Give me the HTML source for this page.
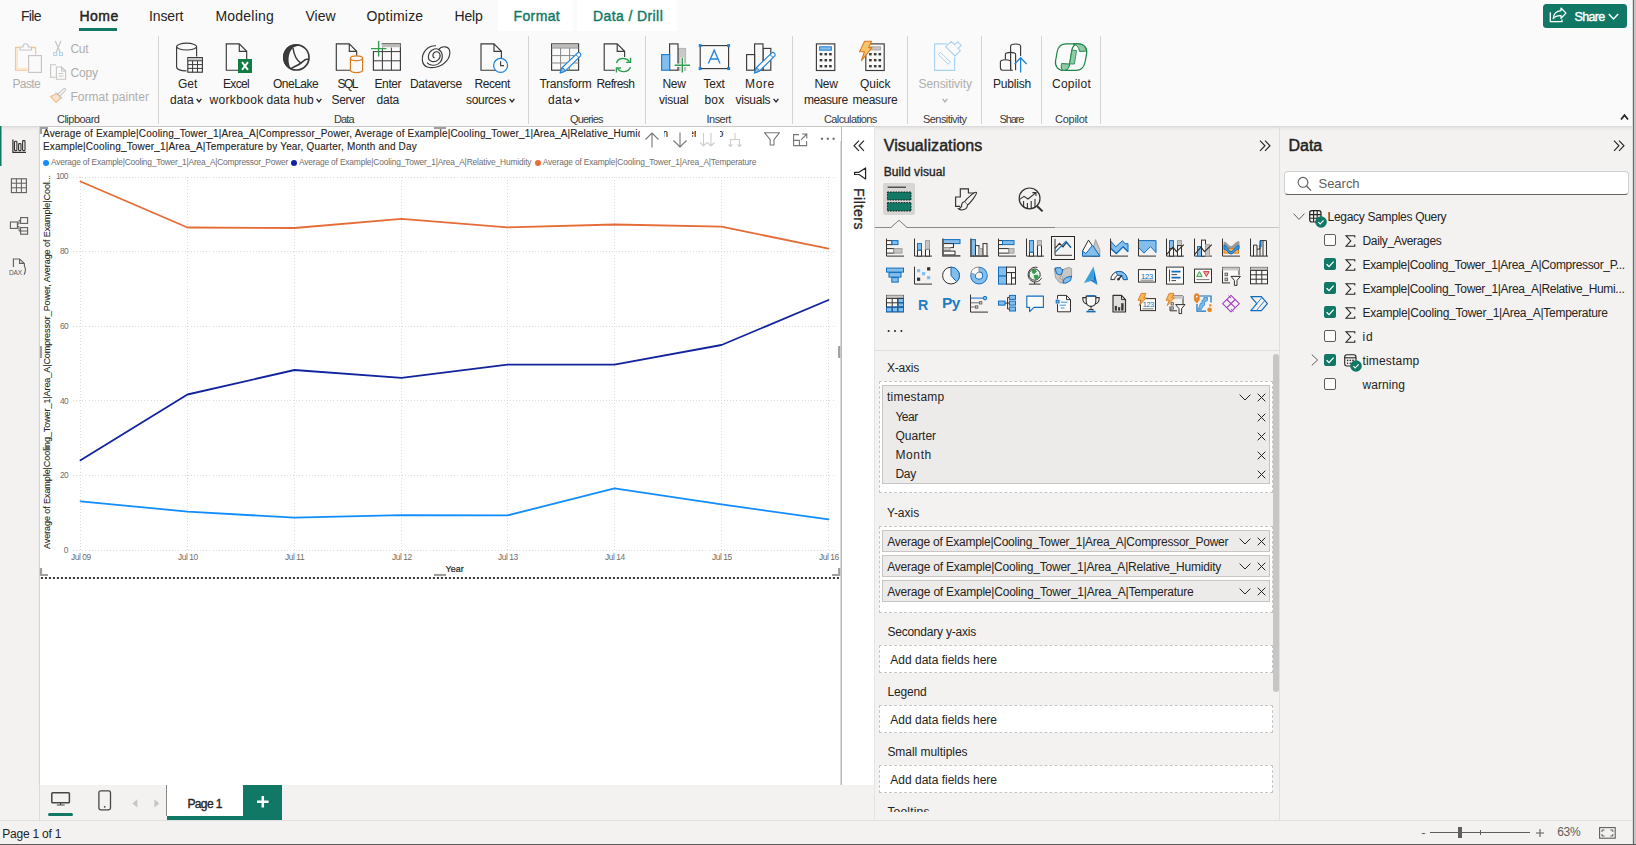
<!DOCTYPE html>
<html lang="en"><head><meta charset="utf-8"><title>Power BI Desktop</title><style>
html,body{margin:0;padding:0;}
body{width:1636px;height:845px;overflow:hidden;position:relative;background:#f3f2f1;font-family:"Liberation Sans",sans-serif;}
.a{position:absolute;display:block;}
.t{position:absolute;display:block;white-space:nowrap;line-height:1;font-family:"Liberation Sans",sans-serif;}
svg{overflow:visible;}
</style></head>
<body>
<div class="a" style="left:0px;top:0px;width:1636px;height:126px;background:#fafafa;"></div>
<div class="a" style="left:498px;top:0px;width:75px;height:30.5px;background:#ffffff;"></div>
<div class="a" style="left:577px;top:0px;width:100px;height:30.5px;background:#ffffff;"></div>
<div class="a" style="left:0px;top:126px;width:1636px;height:719px;background:#f3f2f1;"></div>
<div class="a" style="left:0px;top:126px;width:1636px;height:5px;background:linear-gradient(#d7d6d4,#e3e2e0 25%,#ebeae8 50%,#f0efed 75%,#f3f2f1);"></div>
<div class="a" style="left:40px;top:127px;width:834px;height:657.5px;background:#ffffff;"></div>
<div class="a" style="left:39px;top:127px;width:1px;height:657.5px;background:#d6d5d3;"></div>
<div class="a" style="left:38px;top:127px;width:1px;height:657.5px;background:#eeedeb;"></div>
<div class="a" style="left:840px;top:127px;width:1px;height:657.5px;background:#dcdad8;"></div>
<div class="a" style="left:841px;top:127px;width:1px;height:657.5px;background:#bdbbb8;"></div>
<div class="a" style="left:0px;top:126px;width:1px;height:40px;background:#117865;"></div>
<div class="a" style="left:1px;top:126px;width:1px;height:40px;background:#7db5aa;"></div>
<div class="a" style="left:874px;top:127px;width:1px;height:693px;background:#e5e4e2;"></div>
<div class="a" style="left:1279px;top:127px;width:1px;height:693px;background:#e1dfdd;"></div>
<div class="a" style="left:0px;top:819.5px;width:1636px;height:1.0px;background:#e1dfdd;"></div>
<div class="a" style="left:39px;top:126px;width:836px;height:1px;background:#c9c8c6;"></div>
<span class="t" id="t1" style="left:21px;top:9.40px;font-size:14px;color:#252423;letter-spacing:-0.700px;">File</span>
<span class="t" id="t2" style="left:79.5px;top:9.40px;font-size:14px;color:#252423;-webkit-text-stroke:0.45px #252423;letter-spacing:0.467px;">Home</span>
<div class="a" style="left:79px;top:28px;width:38px;height:3px;background:#117865;"></div>
<span class="t" id="t3" style="left:149px;top:9.40px;font-size:14px;color:#252423;letter-spacing:-0.120px;">Insert</span>
<span class="t" id="t4" style="left:215.5px;top:9.40px;font-size:14px;color:#252423;letter-spacing:0.200px;">Modeling</span>
<span class="t" id="t5" style="left:305.5px;top:9.40px;font-size:14px;color:#252423;letter-spacing:-0.033px;">View</span>
<span class="t" id="t6" style="left:366.5px;top:9.40px;font-size:14px;color:#252423;letter-spacing:0.200px;">Optimize</span>
<span class="t" id="t7" style="left:454.5px;top:9.40px;font-size:14px;color:#252423;letter-spacing:-0.200px;">Help</span>
<span class="t" id="t8" style="left:513.5px;top:9.40px;font-size:14px;color:#117865;-webkit-text-stroke:0.4px #117865;letter-spacing:0.380px;">Format</span>
<span class="t" id="t9" style="left:593px;top:9.40px;font-size:14px;color:#117865;-webkit-text-stroke:0.4px #117865;letter-spacing:0.400px;">Data / Drill</span>
<span class="t" id="t10" style="left:12.5px;top:77.84px;font-size:12px;color:#b0aeac;letter-spacing:-0.650px;">Paste</span>
<span class="t" id="t11" style="left:70.5px;top:42.84px;font-size:12px;color:#b0aeac;letter-spacing:-0.300px;">Cut</span>
<span class="t" id="t12" style="left:70.5px;top:66.84px;font-size:12px;color:#b0aeac;letter-spacing:-0.200px;">Copy</span>
<span class="t" id="t13" style="left:70.5px;top:90.84px;font-size:12px;color:#b0aeac;letter-spacing:0.031px;">Format painter</span>
<span class="t" id="t14" style="left:178px;top:77.84px;font-size:12px;color:#252423;letter-spacing:-0.050px;">Get</span>
<span class="t" id="t15" style="left:170px;top:93.59px;font-size:12px;color:#252423;letter-spacing:0.133px;">data</span>
<svg class="a" style="left:195.5px;top:98.0px;" width="6.0" height="5" viewBox="0 0 6.0 5"><path d="M0.6 0.8 L3.0 4 L5.4 0.8" fill="none" stroke="#252423" stroke-width="1.3"/></svg>
<span class="t" id="t16" style="left:223px;top:77.84px;font-size:12px;color:#252423;letter-spacing:-0.650px;">Excel</span>
<span class="t" id="t17" style="left:209.5px;top:93.59px;font-size:12px;color:#252423;letter-spacing:0.343px;">workbook</span>
<span class="t" id="t18" style="left:273px;top:77.84px;font-size:12px;color:#252423;letter-spacing:-0.517px;">OneLake</span>
<span class="t" id="t19" style="left:266.5px;top:93.59px;font-size:12px;color:#252423;letter-spacing:0.057px;">data hub</span>
<svg class="a" style="left:315.5px;top:98.0px;" width="6.0" height="5" viewBox="0 0 6.0 5"><path d="M0.6 0.8 L3.0 4 L5.4 0.8" fill="none" stroke="#252423" stroke-width="1.3"/></svg>
<span class="t" id="t20" style="left:337.5px;top:77.84px;font-size:12px;color:#252423;letter-spacing:-1.550px;">SQL</span>
<span class="t" id="t21" style="left:331.5px;top:93.59px;font-size:12px;color:#252423;letter-spacing:-0.320px;">Server</span>
<span class="t" id="t22" style="left:374.5px;top:77.84px;font-size:12px;color:#252423;letter-spacing:-0.400px;">Enter</span>
<span class="t" id="t23" style="left:376.5px;top:93.59px;font-size:12px;color:#252423;letter-spacing:-0.200px;">data</span>
<span class="t" id="t24" style="left:410px;top:77.84px;font-size:12px;color:#252423;letter-spacing:-0.325px;">Dataverse</span>
<span class="t" id="t25" style="left:474.5px;top:77.84px;font-size:12px;color:#252423;letter-spacing:-0.420px;">Recent</span>
<span class="t" id="t26" style="left:466px;top:93.59px;font-size:12px;color:#252423;letter-spacing:-0.308px;">sources</span>
<svg class="a" style="left:508.5px;top:98.0px;" width="6.0" height="5" viewBox="0 0 6.0 5"><path d="M0.6 0.8 L3.0 4 L5.4 0.8" fill="none" stroke="#252423" stroke-width="1.3"/></svg>
<span class="t" id="t27" style="left:539.5px;top:77.84px;font-size:12px;color:#252423;letter-spacing:-0.263px;">Transform</span>
<span class="t" id="t28" style="left:548px;top:93.59px;font-size:12px;color:#252423;letter-spacing:0.300px;">data</span>
<svg class="a" style="left:573.5px;top:98.0px;" width="6.0" height="5" viewBox="0 0 6.0 5"><path d="M0.6 0.8 L3.0 4 L5.4 0.8" fill="none" stroke="#252423" stroke-width="1.3"/></svg>
<span class="t" id="t29" style="left:596.5px;top:77.84px;font-size:12px;color:#252423;letter-spacing:-0.600px;">Refresh</span>
<span class="t" id="t30" style="left:662.5px;top:77.84px;font-size:12px;color:#252423;letter-spacing:-0.300px;">New</span>
<span class="t" id="t31" style="left:659px;top:93.59px;font-size:12px;color:#252423;letter-spacing:-0.220px;">visual</span>
<span class="t" id="t32" style="left:703.5px;top:77.84px;font-size:12px;color:#252423;letter-spacing:-0.200px;">Text</span>
<span class="t" id="t33" style="left:704.5px;top:93.59px;font-size:12px;color:#252423;letter-spacing:0.200px;">box</span>
<span class="t" id="t34" style="left:745px;top:77.84px;font-size:12px;color:#252423;letter-spacing:0.633px;">More</span>
<span class="t" id="t35" style="left:735.5px;top:93.59px;font-size:12px;color:#252423;letter-spacing:-0.267px;">visuals</span>
<svg class="a" style="left:772.5px;top:98.0px;" width="6.0" height="5" viewBox="0 0 6.0 5"><path d="M0.6 0.8 L3.0 4 L5.4 0.8" fill="none" stroke="#252423" stroke-width="1.3"/></svg>
<span class="t" id="t36" style="left:814.5px;top:77.84px;font-size:12px;color:#252423;letter-spacing:-0.300px;">New</span>
<span class="t" id="t37" style="left:804px;top:93.59px;font-size:12px;color:#252423;letter-spacing:-0.433px;">measure</span>
<span class="t" id="t38" style="left:860px;top:77.84px;font-size:12px;color:#252423;letter-spacing:-0.025px;">Quick</span>
<span class="t" id="t39" style="left:852.5px;top:93.59px;font-size:12px;color:#252423;letter-spacing:-0.267px;">measure</span>
<span class="t" id="t40" style="left:918.5px;top:77.84px;font-size:12px;color:#b0aeac;letter-spacing:-0.060px;">Sensitivity</span>
<svg class="a" style="left:941.5px;top:98.0px;" width="6.0" height="5" viewBox="0 0 6.0 5"><path d="M0.6 0.8 L3.0 4 L5.4 0.8" fill="none" stroke="#b0aeac" stroke-width="1.3"/></svg>
<span class="t" id="t41" style="left:993px;top:77.84px;font-size:12px;color:#252423;letter-spacing:-0.183px;">Publish</span>
<span class="t" id="t42" style="left:1052px;top:77.84px;font-size:12px;color:#252423;letter-spacing:0.233px;">Copilot</span>
<span class="t" id="t43" style="left:57px;top:113.69px;font-size:11px;color:#3b3a39;letter-spacing:-0.513px;">Clipboard</span>
<span class="t" id="t44" style="left:334px;top:113.69px;font-size:11px;color:#3b3a39;letter-spacing:-0.867px;">Data</span>
<span class="t" id="t45" style="left:570px;top:113.69px;font-size:11px;color:#3b3a39;letter-spacing:-0.850px;">Queries</span>
<span class="t" id="t46" style="left:706.5px;top:113.69px;font-size:11px;color:#3b3a39;letter-spacing:-0.520px;">Insert</span>
<span class="t" id="t47" style="left:824px;top:113.69px;font-size:11px;color:#3b3a39;letter-spacing:-0.600px;">Calculations</span>
<span class="t" id="t48" style="left:923px;top:113.69px;font-size:11px;color:#3b3a39;letter-spacing:-0.560px;">Sensitivity</span>
<span class="t" id="t49" style="left:999.5px;top:113.69px;font-size:11px;color:#3b3a39;letter-spacing:-1.150px;">Share</span>
<span class="t" id="t50" style="left:1055px;top:113.69px;font-size:11px;color:#3b3a39;letter-spacing:-0.267px;">Copilot</span>
<div class="a" style="left:158.0px;top:36px;width:1.0px;height:88px;background:#d6d4d2;"></div>
<div class="a" style="left:528.0px;top:36px;width:1.0px;height:88px;background:#d6d4d2;"></div>
<div class="a" style="left:645.0px;top:36px;width:1.0px;height:88px;background:#d6d4d2;"></div>
<div class="a" style="left:792.0px;top:36px;width:1.0px;height:88px;background:#d6d4d2;"></div>
<div class="a" style="left:907.0px;top:36px;width:1.0px;height:88px;background:#d6d4d2;"></div>
<div class="a" style="left:981.0px;top:36px;width:1.0px;height:88px;background:#d6d4d2;"></div>
<div class="a" style="left:1041.0px;top:36px;width:1.0px;height:88px;background:#d6d4d2;"></div>
<div class="a" style="left:1100.0px;top:36px;width:1.0px;height:88px;background:#d6d4d2;"></div>
<div class="a" style="left:1543px;top:4px;width:84px;height:24px;background:#117865;border-radius:3.5px;"></div>
<span class="t" id="t51" style="left:1574.6px;top:10.62px;font-size:12.5px;color:#ffffff;-webkit-text-stroke:0.4px #ffffff;letter-spacing:-0.675px;">Share</span>
<svg class="a" style="left:1608.2px;top:13px;" width="11" height="8" viewBox="0 0 11 8"><path d="M0.8 1 L5.5 6 L10.2 1" fill="none" stroke="#fff" stroke-width="1.4"/></svg>
<svg class="a" style="left:1549px;top:7px;" width="18" height="16" viewBox="0 0 18 16"><path d="M1.3 5.2 V14.6 H13 V12.4" fill="none" stroke="#fff" stroke-width="1.3"/><path d="M12 1 L17 6.1 L12 11.3 V8.6 C8.4 8.4 6 9.4 4.2 11.6 C4.6 7 7.4 3.9 12 3.6 Z" fill="none" stroke="#fff" stroke-width="1.25" stroke-linejoin="round"/></svg>
<svg class="a" style="left:1619.5px;top:112.5px;" width="9" height="8" viewBox="0 0 9 8"><path d="M1 6.5 L4.5 2.2 L8 6.5" fill="none" stroke="#252423" stroke-width="1.8"/></svg>
<svg class="a" style="left:0;top:0" width="1110" height="126" viewBox="0 0 1110 126" fill="none"><path d="M19.5 47.5 H15.6 V70.2 H27.6 M32 47.5 H35.6 V54.6" stroke="#f2c796" stroke-width="1.3" fill="none"/><path d="M17.2 49.2 V68.6 H27.6" stroke="#fde6c8" stroke-width="1.6" fill="none"/><path d="M20 50 V47 H23 C23 42.6 28.4 42.6 28.4 47 H31.5 V50 Z" stroke="#c8c6c4" stroke-width="1.1" fill="#fafafa"/><rect x="28.6" y="55.6" width="12.8" height="16.8" stroke="#c8c6c4" stroke-width="1.2" fill="#fafafa"/><path d="M55.3 41 L60.2 52.5 M61 41 L56.1 52.5" stroke="#c8c6c4" stroke-width="1.2" fill="none"/><rect x="53.7" y="52.6" width="3" height="2.8" stroke="#a9d3f2" stroke-width="1" fill="none"/><rect x="59.5" y="52.6" width="3" height="2.8" stroke="#a9d3f2" stroke-width="1" fill="none"/><path d="M56 64.8 H50.6 V77.2 H55.6" stroke="#c8c6c4" stroke-width="1.1" fill="none"/><path d="M61.6 67 H56.4 V79.2 H65.6 V71 L61.6 67 V71 H65.6 M58.6 73.5 H63.4 M58.6 76 H63.4" stroke="#c8c6c4" stroke-width="1.1" fill="none"/><path d="M57.5 94.5 L63.6 88.8 C65.2 87.6 66.4 89.6 65 90.8 L60 95.8" stroke="#c8c6c4" stroke-width="1.1" fill="none"/><path d="M50.6 96.6 L57.2 93.4 L61.2 97.6 L56 102.4 Z" stroke="#f0b98a" stroke-width="1.1" fill="#fbe3cf" stroke-linejoin="round"/><path d="M55.4 92.6 L61.8 98.6" stroke="#c8c6c4" stroke-width="1.3"/><path d="M176.6 46.6 V67 C176.6 69.4 181 71 186.6 70.8 M196.6 46.6 V56.6" stroke="#3b3a39" stroke-width="1.15" fill="none"/><ellipse cx="186.6" cy="46.6" rx="10" ry="3.4" stroke="#3b3a39" stroke-width="1.15" fill="#fafafa"/><rect x="187.8" y="57.6" width="14.6" height="14.6" stroke="#3b3a39" stroke-width="1.15" fill="#fafafa"/><rect x="188.4" y="58.2" width="13.4" height="2.2" fill="#c8c6c4"/><path d="M187.8 60.8 H202.4 M187.8 64.6 H202.4 M187.8 68.4 H202.4 M192.6 60.8 V72.2 M197.5 60.8 V72.2" stroke="#3b3a39" stroke-width="1" fill="none"/><path d="M239.3 43.9 H226.3 V70.2 H246.70000000000002 V51.3 L239.3 43.9 Z" stroke="#3b3a39" stroke-width="1.15" fill="#fafafa" stroke-linejoin="miter"/><path d="M239.3 43.9 V51.3 H246.70000000000002" stroke="#3b3a39" stroke-width="1.15" fill="none"/><rect x="238" y="59" width="14" height="14" fill="#107c41"/><path d="M242 62.2 L248 69.8 M248 62.2 L242 69.8" stroke="#fff" stroke-width="1.9"/><circle cx="296.4" cy="57.4" r="12.6" stroke="#3b3a39" stroke-width="1.7" fill="none"/><path d="M296 44.2 C286 44 281.6 53 283.4 60.6 C284.6 65 287.4 68 291 69.4 C287.6 63.4 287.2 53 293.4 47.6 C296 45.6 301 45.6 303.6 47 C301.4 45 298.6 44.2 296 44.2 Z" fill="#3b3a39"/><path d="M293 48 C294 55 297 60.6 301 63.4 M290.6 68.6 C295.6 66.4 300 64.4 303 61.4 C305.4 59.2 307.6 58.4 309 60" stroke="#3b3a39" stroke-width="1.5" fill="none"/><path d="M349.3 43.9 H336.3 V70.2 H356.7 V51.3 L349.3 43.9 Z" stroke="#3b3a39" stroke-width="1.15" fill="#fafafa" stroke-linejoin="miter"/><path d="M349.3 43.9 V51.3 H356.7" stroke="#3b3a39" stroke-width="1.15" fill="none"/><path d="M350.4 58.2 V70 C350.4 73.4 362.6 73.4 362.6 70 V58.2" stroke="#d97b1e" stroke-width="1.2" fill="#fafafa"/><ellipse cx="356.5" cy="58.2" rx="6.1" ry="2.4" stroke="#d97b1e" stroke-width="1.2" fill="#fafafa"/><rect x="373.4" y="43.9" width="27" height="26.3" stroke="#3b3a39" stroke-width="1.15" fill="#fafafa"/><rect x="382" y="44.2" width="18.4" height="3" fill="#bebcba"/><path d="M373.4 51.6 H400.4 M373.4 60.8 H400.4 M382.4 47.6 V70.2 M391.4 47.6 V70.2" stroke="#3b3a39" stroke-width="1" fill="none"/><rect x="371" y="41" width="10.6" height="10" fill="#fafafa"/><path d="M378.6 41 V56.6 M371 48.6 H386.4" stroke="#2e9e4f" stroke-width="1.4"/><path d="M436 45.8 C428 45.4 421.6 52 422.4 60.4 C423 67.4 430 68.6 436.6 67 C445 65 450.4 58 449.8 51.6 C449.2 45.6 441.6 45.6 438.6 49.6 C435.4 47.4 428.6 50.4 428.4 56.6 C428.2 62.4 435 62.8 438.4 59.6 C441.6 56.6 440 51.4 436.2 51.8 C432.6 52.2 431.8 57 434.6 58" stroke="#3b3a39" stroke-width="1.15" fill="none"/><path d="M438.6 49.6 C443.6 52.6 443.4 60 438.6 63.6 C435 66.2 429.6 65.6 427 62.6" stroke="#3b3a39" stroke-width="1.15" fill="none"/><path d="M494 43.9 H481 V70.2 H501.4 V51.3 L494 43.9 Z" stroke="#3b3a39" stroke-width="1.15" fill="#fafafa" stroke-linejoin="miter"/><path d="M494 43.9 V51.3 H501.4" stroke="#3b3a39" stroke-width="1.15" fill="none"/><circle cx="500.6" cy="65.4" r="7" stroke="#2083d5" stroke-width="1.25" fill="#fafafa"/><path d="M500.6 61.2 V65.6 H504" stroke="#3b3a39" stroke-width="1.1" fill="none"/><rect x="551.6" y="43.9" width="27" height="26.3" stroke="#3b3a39" stroke-width="1.15" fill="#fafafa"/><rect x="552.2" y="44.4" width="25.8" height="3.2" fill="#bebcba"/><path d="M551.6 48 H578.6 M551.6 55.6 H578.6 M551.6 63 H578.6 M560.6 48 V70.2 M569.6 48 V70.2" stroke="#8a8886" stroke-width="1" fill="none"/><path d="M560.2 73 L561.8000000000001 68 L577.6 52.8 C579.2 51.6 581.8000000000001 54 580.6 55.8 L565.2 71.2 Z" stroke="#2083d5" stroke-width="1.15" fill="#fafafa" stroke-linejoin="round"/><path d="M560.2 73 L561.8000000000001 68 C563.6 68 565.2 69.4 565.2 71.2 Z" fill="#83beec" stroke="#2083d5" stroke-width="1"/><path d="M575.8000000000001 54.6 L579.0 57.6" stroke="#2083d5" stroke-width="1"/><path d="M617.2 43.9 H604.2 V70.2 H624.6 V51.3 L617.2 43.9 Z" stroke="#3b3a39" stroke-width="1.15" fill="#fafafa" stroke-linejoin="miter"/><path d="M617.2 43.9 V51.3 H624.6" stroke="#3b3a39" stroke-width="1.15" fill="none"/><rect x="615" y="57" width="12" height="14" fill="#fafafa"/><path d="M616.6 63.2 C617.6 57.4 626.4 57 629.4 61.8 M630.4 67 C629 72.6 620.4 73.2 617.6 68.4" stroke="#2e9e4f" stroke-width="1.35" fill="none"/><path d="M630.6 57.8 V62.4 H626 M616.4 72.6 V68 H621" stroke="#2e9e4f" stroke-width="1.35" fill="none"/><rect x="678" y="48.4" width="7.6" height="21.8" fill="#c8c8c8" stroke="#b5b3b1" stroke-width="1"/><rect x="669.6" y="43.9" width="8.4" height="26.3" fill="#fafafa" stroke="#3b3a39" stroke-width="1.15"/><rect x="661.6" y="54.6" width="8" height="15.6" fill="#83beec" stroke="#2083d5" stroke-width="1.2"/><rect x="680.6" y="57.4" width="3.4" height="15" fill="#fafafa"/><rect x="675" y="63.6" width="15" height="3.4" fill="#fafafa"/><path d="M682.3 57.8 V72.6 M674.6 65.3 H690" stroke="#2e9e4f" stroke-width="1.4"/><rect x="700.2" y="45.6" width="28.4" height="23" fill="#fafafa" stroke="#3b3a39" stroke-width="1.15"/><rect x="698.7" y="44.1" width="3" height="3" fill="#2083d5"/><rect x="727.1" y="44.1" width="3" height="3" fill="#2083d5"/><rect x="698.7" y="67.1" width="3" height="3" fill="#2083d5"/><rect x="727.1" y="67.1" width="3" height="3" fill="#2083d5"/><path d="M708.4 63.4 L714.2 50.2 L720 63.4 M710.4 59 H718" stroke="#2083d5" stroke-width="1.3" fill="none"/><rect x="763" y="48.4" width="7.8" height="21.8" fill="#fafafa" stroke="#3b3a39" stroke-width="1.15"/><rect x="754.6" y="43.9" width="8.4" height="26.3" fill="#fafafa" stroke="#3b3a39" stroke-width="1.15"/><rect x="746.6" y="54.6" width="8" height="15.6" fill="#fafafa" stroke="#3b3a39" stroke-width="1.15"/><path d="M754.4 73 L756.0 68 L771.8 52.8 C773.4 51.6 776.0 54 774.8 55.8 L759.4 71.2 Z" stroke="#2083d5" stroke-width="1.15" fill="#fafafa" stroke-linejoin="round"/><path d="M754.4 73 L756.0 68 C757.8 68 759.4 69.4 759.4 71.2 Z" fill="#83beec" stroke="#2083d5" stroke-width="1"/><path d="M770.0 54.6 L773.1999999999999 57.6" stroke="#2083d5" stroke-width="1"/><rect x="816.4" y="43.9" width="18.4" height="26.6" fill="#fafafa" stroke="#3b3a39" stroke-width="1.15"/><rect x="819.6" y="46.8" width="11.8" height="3.4" fill="#83beec" stroke="#2083d5" stroke-width="1"/><rect x="819.7" y="53.0" width="2.6" height="2.4" fill="#3b3a39"/><rect x="819.7" y="59.0" width="2.6" height="2.4" fill="#3b3a39"/><rect x="819.7" y="65.0" width="2.6" height="2.4" fill="#3b3a39"/><rect x="824.5" y="53.0" width="2.6" height="2.4" fill="#3b3a39"/><rect x="824.5" y="59.0" width="2.6" height="2.4" fill="#3b3a39"/><rect x="824.5" y="65.0" width="2.6" height="2.4" fill="#3b3a39"/><rect x="829.1" y="53.0" width="2.6" height="2.4" fill="#3b3a39"/><rect x="829.1" y="59.0" width="2.6" height="2.4" fill="#3b3a39"/><rect x="829.1" y="65.0" width="2.6" height="2.4" fill="#3b3a39"/><rect x="865.8" y="43.9" width="18.4" height="26.6" fill="#fafafa" stroke="#3b3a39" stroke-width="1.15"/><rect x="870.6" y="46.8" width="10" height="3.2" fill="#c8c6c4" stroke="#a19f9d" stroke-width="0.8"/><rect x="869.1" y="53.0" width="2.6" height="2.4" fill="#3b3a39"/><rect x="869.1" y="59.0" width="2.6" height="2.4" fill="#3b3a39"/><rect x="869.1" y="65.0" width="2.6" height="2.4" fill="#3b3a39"/><rect x="873.9" y="53.0" width="2.6" height="2.4" fill="#3b3a39"/><rect x="873.9" y="59.0" width="2.6" height="2.4" fill="#3b3a39"/><rect x="873.9" y="65.0" width="2.6" height="2.4" fill="#3b3a39"/><rect x="878.5" y="53.0" width="2.6" height="2.4" fill="#3b3a39"/><rect x="878.5" y="59.0" width="2.6" height="2.4" fill="#3b3a39"/><rect x="878.5" y="65.0" width="2.6" height="2.4" fill="#3b3a39"/><path d="M864.6 41.2 H871.6 L868.6 47.6 H872 L861.4 60.6 L864.4 51.8 H859.6 Z" fill="#fbc36a" stroke="#d97b1e" stroke-width="1.1" stroke-linejoin="round"/><path d="M947 43.9 H934.6 V70.4 H954.6 V57" stroke="#a9d3f2" stroke-width="1.1" fill="none"/><path d="M945.6 46.6 L951.2 41.4 L960.4 50.6 L955 56 Z M951.2 41.4 L953.6 43.6" stroke="#a9d3f2" stroke-width="1.1" fill="#fafafa" stroke-linejoin="round"/><path d="M954.4 45.2 L957.8 41.8 L961.2 45.4 L957.6 48.6" stroke="#a9d3f2" stroke-width="1.1" fill="#fafafa"/><path d="M938.4 54.6 L940.6 52.4 L950.4 62 L948.2 64.2 Z" stroke="#a9d3f2" stroke-width="1" fill="none"/><path d="M1010.6 70.2 V46.2 C1010.6 43.2 1020.6 43.2 1020.6 46.2 V56" stroke="#3b3a39" stroke-width="1.15" fill="none"/><path d="M1005.4 59.4 V54.4 C1005.4 51.6 1015.6 51.6 1015.6 54.4 V70.2" stroke="#3b3a39" stroke-width="1.15" fill="none"/><path d="M1013 70.2 H1002.6 C1000.6 70.2 1000.4 69 1000.4 67.6 V62 C1000.4 59 1010.6 59 1010.6 62 V70.2" stroke="#3b3a39" stroke-width="1.15" fill="none"/><path d="M1020.6 72.6 V58 M1014.6 64 L1020.6 57.8 L1026.6 64" stroke="#2083d5" stroke-width="1.3" fill="none"/><path d="M1066 43.9 H1078.4 C1084 43.9 1087.6 48 1086.6 53.6 L1085 62.4 C1084 67 1080.6 70.4 1076 70.4 H1063.6 C1058 70.4 1054.6 66 1055.6 60.6 L1057.2 51.6 C1058.2 47 1061.4 43.9 1066 43.9 Z" stroke="#1e8449" stroke-width="1.2" fill="none"/><path d="M1078.4 43.9 C1074.6 43.9 1072.6 46.6 1071.8 50 L1069.6 64 C1069 67.6 1067.4 70.4 1063.6 70.4" stroke="#1e8449" stroke-width="1.2" fill="none"/><path d="M1073 43.9 C1076 43.9 1079 47.6 1079.6 51.4 L1086.4 51 C1086 47 1083 43.9 1078.4 43.9 Z" fill="#8fcaa6" stroke="#1e8449" stroke-width="1"/><path d="M1061.6 63.6 L1069.6 64 C1069.2 67.6 1067.4 70.4 1063.6 70.4 C1061.4 70.4 1060.8 66.4 1061.6 63.6 Z" fill="#8fcaa6" stroke="#1e8449" stroke-width="1"/><path d="M1072 50 L1076.6 50.6 L1074.4 64 L1069.6 64 Z" fill="#8fcaa6" stroke="#1e8449" stroke-width="0.8"/></svg>
<div class="a" style="left:40px;top:127px;width:708px;height:13.5px;overflow:hidden;"><span class="t" id="t52" style="left:3px;top:2.04px;font-size:10px;color:#252423;-webkit-text-stroke:0.12px #252423;letter-spacing:0.176px;">Average of Example|Cooling_Tower_1|Area_A|Compressor_Power, Average of Example|Cooling_Tower_1|Area_A|Relative_Humidity and Average of</span></div>
<span class="t" id="t53" style="left:43px;top:141.53px;font-size:10px;color:#252423;-webkit-text-stroke:0.12px #252423;letter-spacing:0.170px;">Example|Cooling_Tower_1|Area_A|Temperature by Year, Quarter, Month and Day</span>
<div class="a" style="left:640px;top:127px;width:24px;height:25px;background:#ffffff;"></div>
<div class="a" style="left:668px;top:127px;width:24px;height:25px;background:#ffffff;"></div>
<div class="a" style="left:696px;top:127px;width:24px;height:25px;background:#ffffff;"></div>
<div class="a" style="left:724px;top:127px;width:24px;height:25px;background:#ffffff;"></div>
<div class="a" style="left:748px;top:127px;width:93px;height:14px;background:#ffffff;"></div>
<div class="a" style="left:43px;top:159.5px;width:6px;height:6.0px;background:#118DFF;border-radius:50%;"></div>
<div class="a" style="left:291px;top:159.5px;width:6px;height:6.0px;background:#12239E;border-radius:50%;"></div>
<div class="a" style="left:535px;top:159.5px;width:6px;height:6.0px;background:#E66C37;border-radius:50%;"></div>
<span class="t" id="t54" style="left:51px;top:158.19px;font-size:8.4px;color:#706e6c;letter-spacing:-0.195px;">Average of Example|Cooling_Tower_1|Area_A|Compressor_Power</span>
<span class="t" id="t55" style="left:299px;top:158.19px;font-size:8.4px;color:#706e6c;letter-spacing:-0.162px;">Average of Example|Cooling_Tower_1|Area_A|Relative_Humidity</span>
<span class="t" id="t56" style="left:542.8px;top:158.19px;font-size:8.4px;color:#706e6c;letter-spacing:-0.152px;">Average of Example|Cooling_Tower_1|Area_A|Temperature</span>
<svg class="a" style="left:0;top:0" width="845" height="600" viewBox="0 0 845 600"><g stroke="#dddbd9" stroke-width="1" stroke-dasharray="1 2.1" shape-rendering="crispEdges"><line x1="73" y1="177.5" x2="834" y2="177.5"/><line x1="73" y1="251.5" x2="834" y2="251.5"/><line x1="73" y1="326.5" x2="834" y2="326.5"/><line x1="73" y1="400.5" x2="834" y2="400.5"/><line x1="73" y1="475.5" x2="834" y2="475.5"/><line x1="73" y1="550.5" x2="834" y2="550.5"/><line x1="80.5" y1="177" x2="80.5" y2="550.5"/><line x1="187.5" y1="177" x2="187.5" y2="550.5"/><line x1="294.5" y1="177" x2="294.5" y2="550.5"/><line x1="401.5" y1="177" x2="401.5" y2="550.5"/><line x1="507.5" y1="177" x2="507.5" y2="550.5"/><line x1="614.5" y1="177" x2="614.5" y2="550.5"/><line x1="721.5" y1="177" x2="721.5" y2="550.5"/><line x1="828.5" y1="177" x2="828.5" y2="550.5"/></g><polyline points="80.5,501.3 187.5,511.6 294.5,517.7 401.5,515.2 507.5,515.4 614.5,488.4 721.5,504.4 828.5,519.3" fill="none" stroke="#118DFF" stroke-width="1.8" stroke-linejoin="round" stroke-linecap="round"/><polyline points="80.5,460.2 187.5,394.5 294.5,370.0 401.5,377.8 507.5,364.6 614.5,364.6 721.5,345.0 828.5,300.0" fill="none" stroke="#12239E" stroke-width="1.8" stroke-linejoin="round" stroke-linecap="round"/><polyline points="80.5,181.5 187.5,227.5 294.5,228.0 401.5,218.8 507.5,227.3 614.5,224.5 721.5,226.7 828.5,248.7" fill="none" stroke="#E66C37" stroke-width="1.8" stroke-linejoin="round" stroke-linecap="round"/></svg>
<span class="t" id="t57" style="left:56.0px;top:172.19px;font-size:8.4px;color:#706e6c;letter-spacing:-0.800px;">100</span>
<span class="t" id="t58" style="left:60.0px;top:247.09px;font-size:8.4px;color:#706e6c;letter-spacing:-0.600px;">80</span>
<span class="t" id="t59" style="left:60.0px;top:322.19px;font-size:8.4px;color:#706e6c;letter-spacing:-0.600px;">60</span>
<span class="t" id="t60" style="left:60.0px;top:396.89px;font-size:8.4px;color:#706e6c;letter-spacing:-0.600px;">40</span>
<span class="t" id="t61" style="left:60.0px;top:471.49px;font-size:8.4px;color:#706e6c;letter-spacing:-0.600px;">20</span>
<span class="t" id="t62" style="left:63.7px;top:546.09px;font-size:8.4px;color:#706e6c;">0</span>
<span class="t" id="t63" style="left:70.9px;top:552.89px;font-size:8.4px;color:#706e6c;letter-spacing:-0.400px;">Jul 09</span>
<span class="t" id="t64" style="left:177.9px;top:552.89px;font-size:8.4px;color:#706e6c;letter-spacing:-0.400px;">Jul 10</span>
<span class="t" id="t65" style="left:284.9px;top:552.89px;font-size:8.4px;color:#706e6c;letter-spacing:-0.400px;">Jul 11</span>
<span class="t" id="t66" style="left:391.9px;top:552.89px;font-size:8.4px;color:#706e6c;letter-spacing:-0.400px;">Jul 12</span>
<span class="t" id="t67" style="left:497.9px;top:552.89px;font-size:8.4px;color:#706e6c;letter-spacing:-0.400px;">Jul 13</span>
<span class="t" id="t68" style="left:604.9px;top:552.89px;font-size:8.4px;color:#706e6c;letter-spacing:-0.400px;">Jul 14</span>
<span class="t" id="t69" style="left:711.9px;top:552.89px;font-size:8.4px;color:#706e6c;letter-spacing:-0.400px;">Jul 15</span>
<span class="t" id="t70" style="left:818.9px;top:552.89px;font-size:8.4px;color:#706e6c;letter-spacing:-0.400px;">Jul 16</span>
<span class="t" id="t71" style="left:445.5px;top:565.08px;font-size:9px;color:#252423;-webkit-text-stroke:0.2px #252423;letter-spacing:0.033px;">Year</span>
<div class="a" style="left:43px;top:549px;width:373px;height:10px;transform-origin:0 0;transform:rotate(-90deg);"><span class="t" id="t72" style="left:0px;top:-0.02px;font-size:9px;color:#252423;-webkit-text-stroke:0.08px #252423;letter-spacing:-0.072px;">Average of Example|Cooling_Tower_1|Area_A|Compressor_Power, Average of Example|Cool...</span></div>
<svg class="a" style="left:40px;top:575px" width="802" height="4" viewBox="0 0 802 4"><line x1="0.9" y1="3" x2="800" y2="3" stroke="#3b3a39" stroke-width="2.2" stroke-dasharray="2.05 1.95"/></svg>
<svg class="a" style="left:40px;top:127px" width="802" height="450" viewBox="0 0 802 450" fill="none" stroke="#a19f9d" stroke-width="2.2"><path d="M1 7 V1 H8"/><path d="M1 441 V448 H8"/><path d="M792 448 H799.2 V441"/><path d="M1 219 V231"/><path d="M799.2 219 V231"/><path d="M394 1 H406"/><path d="M394 448 H406"/></svg>
<svg class="a" style="left:0;top:0" width="845" height="160" viewBox="0 0 845 160" fill="none" stroke-width="1.1"><path d="M652 147.5 V133 M645.5 139.5 L652 133 L658.5 139.5" stroke="#797775"/><path d="M680 132.5 V147 M673.5 140.5 L680 147 L686.5 140.5" stroke="#797775"/><path d="M703.5 133 V146 M700 142.5 L703.5 146 L707 142.5 M711 133 V146 M707.5 142.5 L711 146 L714.5 142.5" stroke="#d0cecc"/><path d="M735 133 V139 M730.5 146.5 V139.5 H739.5 V146.5 M728.5 144.5 L730.5 146.5 L732.5 144.5 M737.5 144.5 L739.5 146.5 L741.5 144.5" stroke="#d0cecc"/><path d="M764.5 132.7 H779.5 L774 139.6 V145 H770.2 V139.6 Z" stroke="#797775" stroke-linejoin="round"/><path d="M799 134.6 H793.6 V145.6 H806.6 V141 M793.6 140.4 H799.4 V145.6 M802 134 H806.8 V138.6 M806.8 134 L801 139.8" stroke="#797775"/><g fill="#797775"><circle cx="822" cy="138.8" r="1.2"/><circle cx="827.8" cy="138.8" r="1.2"/><circle cx="833.6" cy="138.8" r="1.2"/></g></svg>
<svg class="a" style="left:852.5px;top:139.5px;" width="12" height="11.5" viewBox="0 0 12 11.5"><path d="M11 0.7 L6 5.75 L11 10.8 M6 0.7 L1 5.75 L6 10.8" fill="none" stroke="#252423" stroke-width="1.1"/></svg>
<svg class="a" style="left:853px;top:167px;" width="14" height="13" viewBox="0 0 14 13"><path d="M12.6 0.9 V12 L6 7.5 H1.6 V5.3 H6 Z" fill="none" stroke="#252423" stroke-width="1.2" stroke-linejoin="round"/></svg>
<div class="a" style="left:864.8px;top:188px;width:42px;height:14px;transform-origin:0 0;transform:rotate(90deg);"><span class="t" id="t73" style="left:0px;top:-0.65px;font-size:14px;color:#252423;-webkit-text-stroke:0.3px #252423;letter-spacing:0.567px;">Filters</span></div>
<span class="t" id="t74" style="left:883.75px;top:138.06px;font-size:16px;color:#252423;-webkit-text-stroke:0.45px #252423;letter-spacing:0.069px;">Visualizations</span>
<svg class="a" style="left:1259px;top:139.5px;" width="12" height="11.5" viewBox="0 0 12 11.5"><path d="M1 0.7 L6 5.75 L1 10.8 M6 0.7 L11 5.75 L6 10.8" fill="none" stroke="#252423" stroke-width="1.1"/></svg>
<span class="t" id="t75" style="left:883.75px;top:165.84px;font-size:12px;color:#252423;-webkit-text-stroke:0.35px #252423;letter-spacing:0.059px;">Build visual</span>
<div class="a" style="left:883px;top:183px;width:32px;height:31.5px;background:#d8d6d4;border-radius:2px;"></div>
<svg class="a" style="left:875px;top:218px" width="404" height="11" viewBox="0 0 404 11" fill="none"><path d="M0 9.5 H16 L24 2.2 L32 9.5 H404" stroke="#c8c6c4" stroke-width="1"/><path d="M0 9.5 H16 L24 2.2 L32 9.5 H180" stroke="#8a8886" stroke-width="1"/></svg>
<div class="a" style="left:1051px;top:236px;width:24px;height:23.5px;border:1px solid #252423;box-sizing:border-box;"></div>
<svg class="a" style="left:887px;top:329px;" width="16" height="4" viewBox="0 0 16 4"><g fill="#252423"><circle cx="1.6" cy="2" r="1"/><circle cx="8" cy="2" r="1"/><circle cx="14.4" cy="2" r="1"/></g></svg>
<div class="a" style="left:875px;top:350px;width:404px;height:1px;background:#e1dfdd;"></div>
<div class="a" style="left:1273px;top:353.5px;width:6px;height:338.5px;background:#c8c6c4;border-radius:3px;"></div>
<span class="t" id="t76" style="left:887px;top:361.84px;font-size:12px;color:#252423;letter-spacing:-0.220px;">X-axis</span>
<div class="a" style="left:879px;top:381px;width:394px;height:112px;background:#ffffff;border:1px dashed #c8c6c4;box-sizing:border-box;"></div>
<div class="a" style="left:882px;top:385px;width:388px;height:99px;background:#edebe9;border:1px solid #c8c6c4;box-sizing:border-box;"></div>
<span class="t" id="t77" style="left:887px;top:390.84px;font-size:12px;color:#252423;letter-spacing:0.237px;">timestamp</span>
<svg class="a" style="left:1239px;top:393.5px;" width="12" height="7" viewBox="0 0 12 7"><path d="M0.6 0.6 L6 6 L11.4 0.6" stroke="#252423" stroke-width="1" fill="none"/></svg>
<svg class="a" style="left:1256.5px;top:392.5px;" width="9" height="9" viewBox="0 0 9 9"><path d="M0.7 0.7 L8.3 8.3 M8.3 0.7 L0.7 8.3" stroke="#252423" stroke-width="1" fill="none"/></svg>
<span class="t" id="t78" style="left:895.5px;top:410.84px;font-size:12px;color:#252423;letter-spacing:-0.533px;">Year</span>
<svg class="a" style="left:1256.5px;top:412.5px;" width="9" height="9" viewBox="0 0 9 9"><path d="M0.7 0.7 L8.3 8.3 M8.3 0.7 L0.7 8.3" stroke="#252423" stroke-width="1" fill="none"/></svg>
<span class="t" id="t79" style="left:895.5px;top:429.84px;font-size:12px;color:#252423;letter-spacing:-0.017px;">Quarter</span>
<svg class="a" style="left:1256.5px;top:431.5px;" width="9" height="9" viewBox="0 0 9 9"><path d="M0.7 0.7 L8.3 8.3 M8.3 0.7 L0.7 8.3" stroke="#252423" stroke-width="1" fill="none"/></svg>
<span class="t" id="t80" style="left:895.5px;top:448.84px;font-size:12px;color:#252423;letter-spacing:0.600px;">Month</span>
<svg class="a" style="left:1256.5px;top:450.5px;" width="9" height="9" viewBox="0 0 9 9"><path d="M0.7 0.7 L8.3 8.3 M8.3 0.7 L0.7 8.3" stroke="#252423" stroke-width="1" fill="none"/></svg>
<span class="t" id="t81" style="left:895.5px;top:467.84px;font-size:12px;color:#252423;letter-spacing:-0.300px;">Day</span>
<svg class="a" style="left:1256.5px;top:469.5px;" width="9" height="9" viewBox="0 0 9 9"><path d="M0.7 0.7 L8.3 8.3 M8.3 0.7 L0.7 8.3" stroke="#252423" stroke-width="1" fill="none"/></svg>
<span class="t" id="t82" style="left:887px;top:506.84px;font-size:12px;color:#252423;letter-spacing:-0.020px;">Y-axis</span>
<div class="a" style="left:879px;top:526px;width:394px;height:86.5px;background:#ffffff;border:1px dashed #c8c6c4;box-sizing:border-box;"></div>
<div class="a" style="left:882px;top:530px;width:388px;height:22px;background:#edebe9;border:1px solid #c8c6c4;box-sizing:border-box;"></div>
<span class="t" id="t83" style="left:887.25px;top:535.54px;font-size:12px;color:#252423;letter-spacing:-0.259px;">Average of Example|Cooling_Tower_1|Area_A|Compressor_Power</span>
<svg class="a" style="left:1239px;top:537.5px;" width="12" height="7" viewBox="0 0 12 7"><path d="M0.6 0.6 L6 6 L11.4 0.6" stroke="#252423" stroke-width="1" fill="none"/></svg>
<svg class="a" style="left:1256.5px;top:536.5px;" width="9" height="9" viewBox="0 0 9 9"><path d="M0.7 0.7 L8.3 8.3 M8.3 0.7 L0.7 8.3" stroke="#252423" stroke-width="1" fill="none"/></svg>
<div class="a" style="left:882px;top:555px;width:388px;height:22px;background:#edebe9;border:1px solid #c8c6c4;box-sizing:border-box;"></div>
<span class="t" id="t84" style="left:887.25px;top:560.54px;font-size:12px;color:#252423;letter-spacing:-0.218px;">Average of Example|Cooling_Tower_1|Area_A|Relative_Humidity</span>
<svg class="a" style="left:1239px;top:562.5px;" width="12" height="7" viewBox="0 0 12 7"><path d="M0.6 0.6 L6 6 L11.4 0.6" stroke="#252423" stroke-width="1" fill="none"/></svg>
<svg class="a" style="left:1256.5px;top:561.5px;" width="9" height="9" viewBox="0 0 9 9"><path d="M0.7 0.7 L8.3 8.3 M8.3 0.7 L0.7 8.3" stroke="#252423" stroke-width="1" fill="none"/></svg>
<div class="a" style="left:882px;top:580px;width:388px;height:22px;background:#edebe9;border:1px solid #c8c6c4;box-sizing:border-box;"></div>
<span class="t" id="t85" style="left:887.25px;top:585.54px;font-size:12px;color:#252423;letter-spacing:-0.209px;">Average of Example|Cooling_Tower_1|Area_A|Temperature</span>
<svg class="a" style="left:1239px;top:587.5px;" width="12" height="7" viewBox="0 0 12 7"><path d="M0.6 0.6 L6 6 L11.4 0.6" stroke="#252423" stroke-width="1" fill="none"/></svg>
<svg class="a" style="left:1256.5px;top:586.5px;" width="9" height="9" viewBox="0 0 9 9"><path d="M0.7 0.7 L8.3 8.3 M8.3 0.7 L0.7 8.3" stroke="#252423" stroke-width="1" fill="none"/></svg>
<span class="t" id="t86" style="left:887.4px;top:625.84px;font-size:12px;color:#252423;letter-spacing:-0.220px;">Secondary y-axis</span>
<div class="a" style="left:879px;top:645px;width:394px;height:28px;background:#ffffff;border:1px dashed #c8c6c4;box-sizing:border-box;"></div>
<span class="t" id="t87" style="left:890.3px;top:654.14px;font-size:12px;color:#252423;letter-spacing:0.000px;">Add data fields here</span>
<span class="t" id="t88" style="left:887.4px;top:685.84px;font-size:12px;color:#252423;letter-spacing:-0.160px;">Legend</span>
<div class="a" style="left:879px;top:705px;width:394px;height:28px;background:#ffffff;border:1px dashed #c8c6c4;box-sizing:border-box;"></div>
<span class="t" id="t89" style="left:890.3px;top:714.14px;font-size:12px;color:#252423;letter-spacing:0.000px;">Add data fields here</span>
<span class="t" id="t90" style="left:887.4px;top:745.84px;font-size:12px;color:#252423;letter-spacing:-0.036px;">Small multiples</span>
<div class="a" style="left:879px;top:765px;width:394px;height:28px;background:#ffffff;border:1px dashed #c8c6c4;box-sizing:border-box;"></div>
<span class="t" id="t91" style="left:890.3px;top:774.14px;font-size:12px;color:#252423;letter-spacing:0.000px;">Add data fields here</span>
<div class="a" style="left:887.4px;top:804px;width:60px;height:7.6px;overflow:hidden;"><span class="t" id="t92" style="left:0px;top:1.84px;font-size:12px;color:#252423;letter-spacing:0.200px;">Tooltips</span></div>
<span class="t" id="t93" style="left:1288.5px;top:137.86px;font-size:16px;color:#252423;-webkit-text-stroke:0.5px #252423;letter-spacing:-0.033px;">Data</span>
<svg class="a" style="left:1613px;top:139.5px;" width="12" height="11.5" viewBox="0 0 12 11.5"><path d="M1 0.7 L6 5.75 L1 10.8 M6 0.7 L11 5.75 L6 10.8" fill="none" stroke="#252423" stroke-width="1.1"/></svg>
<div class="a" style="left:1284px;top:171px;width:345px;height:24px;background:#ffffff;border:1px solid #d1d1d1;border-bottom:1px solid #616161;border-radius:4px;box-sizing:border-box;"></div>
<svg class="a" style="left:1296.5px;top:175.5px;" width="15" height="16" viewBox="0 0 15 16"><circle cx="6" cy="6.3" r="4.9" fill="none" stroke="#605e5c" stroke-width="1.1"/><path d="M9.6 10 L14 14.6" stroke="#605e5c" stroke-width="1.2"/></svg>
<span class="t" id="t94" style="left:1318.5px;top:176.50px;font-size:13px;color:#605e5c;letter-spacing:-0.020px;">Search</span>
<svg class="a" style="left:1293px;top:212.5px;" width="12" height="7.5" viewBox="0 0 12 7.5"><path d="M0.5 0.6 L6 6.4 L11.5 0.6" fill="none" stroke="#605e5c" stroke-width="1"/></svg>
<svg class="a" style="left:1309px;top:210px;" width="13" height="13" viewBox="0 0 13 13"><rect x="0.7" y="0.7" width="11.3" height="11.3" rx="2.2" fill="none" stroke="#252423" stroke-width="1.2"/><path d="M0.7 4.6 H12 M0.7 8.2 H12 M4.6 0.7 V12 M8.2 0.7 V12" stroke="#252423" stroke-width="1.1"/></svg>
<svg class="a" style="left:1315px;top:215.8px;" width="12" height="12" viewBox="0 0 12 12"><circle cx="6" cy="6" r="5.8" fill="#117865"/><path d="M3.4 6.2 L5.2 8 L8.6 4.4" fill="none" stroke="#fff" stroke-width="1.1"/></svg>
<span class="t" id="t95" style="left:1327.5px;top:210.59px;font-size:12px;color:#252423;letter-spacing:-0.295px;">Legacy Samples Query</span>
<div class="a" style="left:1324px;top:234.3px;width:12px;height:12.0px;background:#ffffff;border:1px solid #605e5c;border-radius:2px;box-sizing:border-box;"></div>
<svg class="a" style="left:1344.5px;top:234.5px;" width="11" height="12" viewBox="0 0 11 12"><path d="M9.8 2.6 V0.7 H1 L5.8 5.9 L1 11.2 H9.8 V9.3" fill="none" stroke="#252423" stroke-width="1.05" stroke-linejoin="miter"/></svg>
<span class="t" id="t96" style="left:1362.5px;top:234.84px;font-size:12px;color:#252423;letter-spacing:-0.354px;">Daily_Averages</span>
<div class="a" style="left:1324px;top:258.3px;width:12px;height:12.0px;background:#117865;border-radius:2px;"></div>
<svg class="a" style="left:1324px;top:258.3px;" width="12" height="12" viewBox="0 0 12 12"><path d="M2.6 6.2 L5 8.6 L9.6 3.6" fill="none" stroke="#fff" stroke-width="1.3"/></svg>
<svg class="a" style="left:1344.5px;top:258.5px;" width="11" height="12" viewBox="0 0 11 12"><path d="M9.8 2.6 V0.7 H1 L5.8 5.9 L1 11.2 H9.8 V9.3" fill="none" stroke="#252423" stroke-width="1.05" stroke-linejoin="miter"/></svg>
<span class="t" id="t97" style="left:1362.5px;top:258.84px;font-size:12px;color:#252423;letter-spacing:-0.324px;">Example|Cooling_Tower_1|Area_A|Compressor_P...</span>
<div class="a" style="left:1324px;top:282.3px;width:12px;height:12.0px;background:#117865;border-radius:2px;"></div>
<svg class="a" style="left:1324px;top:282.3px;" width="12" height="12" viewBox="0 0 12 12"><path d="M2.6 6.2 L5 8.6 L9.6 3.6" fill="none" stroke="#fff" stroke-width="1.3"/></svg>
<svg class="a" style="left:1344.5px;top:282.5px;" width="11" height="12" viewBox="0 0 11 12"><path d="M9.8 2.6 V0.7 H1 L5.8 5.9 L1 11.2 H9.8 V9.3" fill="none" stroke="#252423" stroke-width="1.05" stroke-linejoin="miter"/></svg>
<span class="t" id="t98" style="left:1362.5px;top:282.84px;font-size:12px;color:#252423;letter-spacing:-0.317px;">Example|Cooling_Tower_1|Area_A|Relative_Humi...</span>
<div class="a" style="left:1324px;top:306.3px;width:12px;height:12.0px;background:#117865;border-radius:2px;"></div>
<svg class="a" style="left:1324px;top:306.3px;" width="12" height="12" viewBox="0 0 12 12"><path d="M2.6 6.2 L5 8.6 L9.6 3.6" fill="none" stroke="#fff" stroke-width="1.3"/></svg>
<svg class="a" style="left:1344.5px;top:306.5px;" width="11" height="12" viewBox="0 0 11 12"><path d="M9.8 2.6 V0.7 H1 L5.8 5.9 L1 11.2 H9.8 V9.3" fill="none" stroke="#252423" stroke-width="1.05" stroke-linejoin="miter"/></svg>
<span class="t" id="t99" style="left:1362.5px;top:306.84px;font-size:12px;color:#252423;letter-spacing:-0.259px;">Example|Cooling_Tower_1|Area_A|Temperature</span>
<div class="a" style="left:1324px;top:330.3px;width:12px;height:12.0px;background:#ffffff;border:1px solid #605e5c;border-radius:2px;box-sizing:border-box;"></div>
<svg class="a" style="left:1344.5px;top:330.5px;" width="11" height="12" viewBox="0 0 11 12"><path d="M9.8 2.6 V0.7 H1 L5.8 5.9 L1 11.2 H9.8 V9.3" fill="none" stroke="#252423" stroke-width="1.05" stroke-linejoin="miter"/></svg>
<span class="t" id="t100" style="left:1362.5px;top:330.84px;font-size:12px;color:#252423;letter-spacing:0.900px;">id</span>
<div class="a" style="left:1324px;top:354.3px;width:12px;height:12.0px;background:#117865;border-radius:2px;"></div>
<svg class="a" style="left:1324px;top:354.3px;" width="12" height="12" viewBox="0 0 12 12"><path d="M2.6 6.2 L5 8.6 L9.6 3.6" fill="none" stroke="#fff" stroke-width="1.3"/></svg>
<svg class="a" style="left:1344px;top:354.3px;" width="13" height="13" viewBox="0 0 13 13"><rect x="0.7" y="0.7" width="11.3" height="11.3" rx="2.2" fill="none" stroke="#252423" stroke-width="1.1"/><path d="M0.7 3.8 H12" stroke="#252423" stroke-width="1.1"/><g fill="#252423"><circle cx="3.6" cy="6.4" r="0.8"/><circle cx="6.3" cy="6.4" r="0.8"/><circle cx="9" cy="6.4" r="0.8"/><circle cx="3.6" cy="9.2" r="0.8"/><circle cx="6.3" cy="9.2" r="0.8"/></g></svg>
<svg class="a" style="left:1349.5px;top:360.3px;" width="12" height="12" viewBox="0 0 12 12"><circle cx="6" cy="6" r="5.8" fill="#117865"/><path d="M3.4 6.2 L5.2 8 L8.6 4.4" fill="none" stroke="#fff" stroke-width="1.1"/></svg>
<svg class="a" style="left:1310.5px;top:354.3px;" width="8" height="12" viewBox="0 0 8 12"><path d="M0.8 0.6 L6.6 6 L0.8 11.4" fill="none" stroke="#605e5c" stroke-width="1"/></svg>
<span class="t" id="t101" style="left:1362.5px;top:354.84px;font-size:12px;color:#252423;letter-spacing:0.175px;">timestamp</span>
<div class="a" style="left:1324px;top:378.3px;width:12px;height:12.0px;background:#ffffff;border:1px solid #605e5c;border-radius:2px;box-sizing:border-box;"></div>
<span class="t" id="t102" style="left:1362.5px;top:378.84px;font-size:12px;color:#252423;letter-spacing:0.067px;">warning</span>
<div class="a" style="left:1632px;top:0px;width:1px;height:845px;background:#dcdcdc;"></div>
<div class="a" style="left:1633px;top:0px;width:1px;height:845px;background:#6a6a6a;"></div>
<div class="a" style="left:1634px;top:0px;width:2px;height:845px;background:#c6c6c6;"></div>
<svg class="a" style="left:0;top:0" width="1280" height="330" viewBox="0 0 1280 330" fill="none"><g transform="translate(886.0,238.6)"><path d="M0.5 0 V17.5 H18" stroke="#323130" stroke-width="1" fill="none" /><rect x="0.5" y="2" width="5.5" height="4" fill="#fbfaf9" stroke="#323130" stroke-width="1"/><rect x="6" y="2" width="6" height="4" fill="#83beec" stroke="#106ebe" stroke-width="1"/><rect x="0.5" y="10" width="7.5" height="4.5" fill="#fbfaf9" stroke="#323130" stroke-width="1"/><rect x="8" y="10" width="8" height="4.5" fill="#c8c6c4" stroke="#a19f9d" stroke-width="1"/></g><g transform="translate(914.0,238.6)"><path d="M0.5 0 V17.5 H18" stroke="#323130" stroke-width="1" fill="none" /><rect x="3.5" y="11.5" width="4" height="6" fill="#fbfaf9" stroke="#323130" stroke-width="1"/><rect x="3.5" y="5" width="4" height="6.5" fill="#83beec" stroke="#106ebe" stroke-width="1"/><rect x="11.5" y="10.5" width="4" height="7" fill="#fbfaf9" stroke="#323130" stroke-width="1"/><rect x="11.5" y="2" width="4" height="8.5" fill="#c8c6c4" stroke="#a19f9d" stroke-width="1"/></g><g transform="translate(942.0,238.6)"><rect x="1" y="1" width="17" height="4" fill="#83beec" stroke="#106ebe" stroke-width="1"/><rect x="1" y="5" width="10.5" height="4" fill="#fbfaf9" stroke="#323130" stroke-width="1"/><rect x="1" y="9" width="7" height="3.5" fill="#c8c6c4" stroke="#a19f9d" stroke-width="1"/><rect x="1" y="12.5" width="12" height="3.8" fill="#fbfaf9" stroke="#323130" stroke-width="1"/><path d="M0.9 0 V17.3 H18.4" stroke="#605e5c" stroke-width="1.7" fill="none" /></g><g transform="translate(970.0,238.6)"><rect x="1" y="1" width="4.5" height="16.4" fill="#83beec" stroke="#106ebe" stroke-width="1"/><rect x="5.5" y="7" width="3.5" height="10.4" fill="#fbfaf9" stroke="#323130" stroke-width="1"/><rect x="9" y="10" width="4" height="7.4" fill="#c8c6c4" stroke="#a19f9d" stroke-width="1"/><rect x="13" y="5" width="4" height="12.4" fill="#fbfaf9" stroke="#323130" stroke-width="1"/><path d="M0.9 0 V17.5 H18.4" stroke="#605e5c" stroke-width="1.7" fill="none" /></g><g transform="translate(998.0,238.6)"><path d="M0.5 0 V17.5 H18" stroke="#323130" stroke-width="1" fill="none" /><rect x="0.5" y="2" width="4" height="4" fill="#fbfaf9" stroke="#323130" stroke-width="1"/><rect x="4.5" y="2" width="11.5" height="4" fill="#83beec" stroke="#106ebe" stroke-width="1"/><rect x="0.5" y="10" width="10.5" height="4.5" fill="#fbfaf9" stroke="#323130" stroke-width="1"/><rect x="11" y="10" width="5" height="4.5" fill="#c8c6c4" stroke="#a19f9d" stroke-width="1"/></g><g transform="translate(1026.0,238.6)"><path d="M0.5 0 V17.5 H18" stroke="#323130" stroke-width="1" fill="none" /><rect x="3.5" y="13.5" width="4" height="4" fill="#fbfaf9" stroke="#323130" stroke-width="1"/><rect x="3.5" y="2" width="4" height="11.5" fill="#83beec" stroke="#106ebe" stroke-width="1"/><rect x="11.5" y="6.5" width="4" height="11" fill="#fbfaf9" stroke="#323130" stroke-width="1"/><rect x="11.5" y="2" width="4" height="4.5" fill="#c8c6c4" stroke="#a19f9d" stroke-width="1"/></g><g transform="translate(1053.5,238.8)"><path d="M1.5 0 V16.5 H18.5" stroke="#323130" stroke-width="1" fill="none" /><path d="M1.5 9.5 L6 4.5 L9.5 8 L13 3.5 L17.5 8.5" stroke="#323130" stroke-width="1.1" fill="none" /><path d="M1.5 13.5 L12.5 2.5 L17.5 9" stroke="#106ebe" stroke-width="1.1" fill="none" /></g><g transform="translate(1082.0,238.6)"><path d="M9.5 17.5 L13.5 1 L17.8 11 V17.5 Z" stroke="#a19f9d" stroke-width="1" fill="#c8c6c4" /><path d="M0.5 12.5 L6.5 1.5 L17.5 17.5 H0.5 Z" stroke="#323130" stroke-width="1" fill="#fbfaf9" stroke-linejoin="round"/><path d="M0.5 12.5 L4 15 L10.5 6.5 L17.8 17.5 H0.5 Z" stroke="#106ebe" stroke-width="1" fill="#83beec" stroke-linejoin="round"/></g><g transform="translate(1110.0,238.6)"><path d="M0.9 2.7 L5.7 8.2 L12.5 2.1 L14.9 5.1 H18 V13.1 L13.1 8.2 L6.4 14.9 L0.9 10 Z" stroke="#106ebe" stroke-width="1" fill="#83beec" stroke-linejoin="round"/><path d="M0.9 10 L6.4 14.9 L13.1 8.2 L18 13.1" stroke="#106ebe" stroke-width="1.3" fill="none" /><path d="M0.5 0 V17.5 H18" stroke="#323130" stroke-width="1" fill="none" /></g><g transform="translate(1138.0,238.6)"><path d="M0.5 2 H18 V14 L12.5 8 L6 14.5 L0.5 9 Z" stroke="#106ebe" stroke-width="1" fill="#83beec" /><path d="M0.5 0 V17.5 H18" stroke="#323130" stroke-width="1" fill="none" /></g><g transform="translate(1166.0,238.6)"><path d="M0.5 0 V17.5 H18" stroke="#323130" stroke-width="1" fill="none" /><rect x="3.5" y="2" width="4" height="15.5" fill="#83beec" stroke="#106ebe" stroke-width="1"/><rect x="3.5" y="10" width="4" height="7.5" fill="#fbfaf9" stroke="#323130" stroke-width="1"/><rect x="11.5" y="2" width="4" height="5" fill="#c8c6c4" stroke="#a19f9d" stroke-width="1"/><rect x="11.5" y="7" width="4" height="10.5" fill="#fbfaf9" stroke="#323130" stroke-width="1"/><path d="M0.5 16 L7 8.5 L10.5 13 L17.8 6" stroke="#323130" stroke-width="1.2" fill="none" /></g><g transform="translate(1194.0,238.6)"><path d="M0.5 0 V17.5 H18" stroke="#323130" stroke-width="1" fill="none" /><rect x="3.5" y="8" width="4" height="9.5" fill="#83beec" stroke="#106ebe" stroke-width="1"/><rect x="7.5" y="1.5" width="4" height="16" fill="#fbfaf9" stroke="#323130" stroke-width="1"/><rect x="11.5" y="6" width="4" height="11.5" fill="#c8c6c4" stroke="#a19f9d" stroke-width="1"/><path d="M0.5 16 L7 8.5 L10.5 13 L17.8 6" stroke="#323130" stroke-width="1.2" fill="none" /></g><g transform="translate(1222.0,238.6)"><path d="M2 3.5 C5 3.5 6.5 8 9 8 C11.5 8 13 3 17 3 V9 C13 9 11.5 13 9 13 C6.5 13 5 9.5 2 9.5 Z" stroke="#a19f9d" stroke-width="1" fill="#9a9896" /><rect x="2" y="10" width="14.5" height="4.5" fill="#f9b65c" stroke="#d97b1e" stroke-width="1"/><path d="M2 6.5 C5 6.5 6.5 13 9 13 C11.5 13 13 7 17 7 V10.5 C13 10.5 11.5 15.5 9 15.5 C6.5 15.5 5 10.5 2 10.5 Z" stroke="#106ebe" stroke-width="1" fill="#3a96dd" /><path d="M0.5 0 V17.5 H18" stroke="#323130" stroke-width="1" fill="none" /></g><g transform="translate(1250.0,238.6)"><path d="M0.5 0 V17.5 H18" stroke="#323130" stroke-width="1" fill="none" /><path d="M3.5 17.5 V6.5 H7 V17.5 M7 10.5 H10 V6 M10 17.5 V2 H13 V17.5 M13 2 H16.5 V17.5" stroke="#323130" stroke-width="1" fill="none" /><path d="M10.8 2 V8.5" stroke="#106ebe" stroke-width="1.6" fill="none" /></g><g transform="translate(886.0,266.6)"><rect x="0.5" y="1.5" width="17" height="4" fill="#83beec" stroke="#106ebe" stroke-width="1"/><rect x="3" y="6" width="12" height="4.5" fill="#83beec" stroke="#106ebe" stroke-width="1"/><rect x="5.8" y="11" width="6.4" height="4.5" fill="#83beec" stroke="#106ebe" stroke-width="1"/></g><g transform="translate(914.0,266.6)"><path d="M0.5 0 V17.5 H18" stroke="#323130" stroke-width="1" fill="none" /><rect x="3.5" y="3" width="2.2" height="2.2" fill="#83beec" stroke="#83beec" stroke-width="1"/><rect x="8.5" y="6" width="2.2" height="2.2" fill="#83beec" stroke="#83beec" stroke-width="1"/><rect x="13.5" y="10" width="2.2" height="2.2" fill="#83beec" stroke="#83beec" stroke-width="1"/><rect x="13.6" y="1.2" width="2.2" height="2.2" fill="#323130" stroke="#323130" stroke-width="1"/><rect x="3.5" y="11.5" width="2.2" height="2.2" fill="#323130" stroke="#323130" stroke-width="1"/></g><g transform="translate(942.0,266.6)"><circle cx="9" cy="9" r="8.4" fill="#fbfaf9" stroke="#323130" stroke-width="1"/><path d="M9 0.6 A8.4 8.4 0 0 1 14.6 15.2 L9 9 Z" stroke="#106ebe" stroke-width="1" fill="#83beec" stroke-linejoin="round"/></g><g transform="translate(970.0,266.6)"><circle cx="9" cy="9" r="6" fill="none" stroke="#106ebe" stroke-width="5.6"/><circle cx="9" cy="9" r="6" fill="none" stroke="#83beec" stroke-width="3.8"/><path d="M9 0.4 A8.6 8.6 0 0 0 0.8 6.6 L5.8 8 A3.4 3.4 0 0 1 9 5.6 Z" stroke="#8a8886" stroke-width="0.9" fill="#fbfaf9" /></g><g transform="translate(998.0,266.6)"><rect x="0.5" y="0.5" width="8" height="9" fill="#83beec" stroke="#106ebe" stroke-width="1"/><rect x="0.5" y="9.5" width="8" height="8" fill="#83beec" stroke="#106ebe" stroke-width="1"/><rect x="8.5" y="0.5" width="9" height="5.5" fill="#fbfaf9" stroke="#323130" stroke-width="1"/><rect x="8.5" y="6" width="5" height="11.5" fill="#fbfaf9" stroke="#323130" stroke-width="1"/><rect x="13.5" y="6" width="4" height="5.5" fill="#fbfaf9" stroke="#323130" stroke-width="1"/><rect x="13.5" y="11.5" width="4" height="6" fill="#fbfaf9" stroke="#323130" stroke-width="1"/></g><g transform="translate(1026.0,266.6)"><circle cx="8.6" cy="8" r="5.6" fill="#e8f3ea" stroke="#323130" stroke-width="1"/><path d="M6 4 L9 3 L10.5 5 L8.5 7 L6.5 6.5 Z M8 9 L11.5 8.5 L12.5 10.5 L10 13 L8.5 11.5 Z" stroke="#1e8e3e" stroke-width="0.6" fill="#2ea043" /><path d="M11.5 0.8 C2 -1 -1 11 6 14.6 C10 16.4 14 14.6 15.4 11.6 M8.6 15.4 V17.4 M3 17.5 H14.5" stroke="#323130" stroke-width="1" fill="none" /></g><g transform="translate(1054.0,266.6)"><path d="M0.5 2 L4 1 L5 5 L7.5 7.5 L6 12 L9.5 13.5 L9 16.5 L5.5 16 L1.5 11 Z" stroke="#a19f9d" stroke-width="1" fill="#c8c6c4" /><path d="M9 3 L14.5 0.8 L17.6 2 V9.5 L12 11 L8.5 12.8 L7.5 7.5 Z" stroke="#a19f9d" stroke-width="1" fill="#c8c6c4" /><path d="M1 1.5 L6.5 1 L7.8 3 L9 3 L7.5 7.5 L5.5 8.2 L2.5 7 Z" stroke="#106ebe" stroke-width="1" fill="#83beec" stroke-linejoin="round"/><path d="M12 11 L17.6 9.5 L16.5 14 L12 16.5 L9 16.5 L9.5 13.5 Z" stroke="#106ebe" stroke-width="1" fill="#83beec" stroke-linejoin="round"/></g><g transform="translate(1082.0,266.6)"><path d="M11.5 0 L2 16.5 L11.5 12.5 Z" stroke="none" stroke-width="0" fill="#3aa0d8" /><path d="M11.5 0 L15.5 18.5 L11.5 12.5 Z" stroke="none" stroke-width="0" fill="#1170cf" /><path d="M2 16.5 L11.5 12.5 L15.5 18.5 L9 14.5 Z" stroke="none" stroke-width="0" fill="#1f87d6" /></g><g transform="translate(1110.0,266.6)"><path d="M0.8 13 A8.2 8.2 0 0 1 17.2 13 H13.4 A4.4 4.4 0 0 0 4.6 13 Z" stroke="#323130" stroke-width="1" fill="#fbfaf9" stroke-linejoin="round"/><path d="M6 5.4 A8.2 8.2 0 0 1 17.2 13 H13.4 A4.4 4.4 0 0 0 7.6 8.8 Z" stroke="#106ebe" stroke-width="1" fill="#83beec" stroke-linejoin="round"/><path d="M8.2 12.8 L12 8.6" stroke="#323130" stroke-width="1.5" fill="none" /><circle cx="8.4" cy="12.6" r="1.3" fill="#323130"/></g><g transform="translate(1138.0,266.6)"><rect x="0.5" y="3" width="17" height="12.5" fill="#fbfaf9" stroke="#323130" stroke-width="1"/><text x="9" y="12.2" font-family="Liberation Sans,sans-serif" font-size="7.6" text-anchor="middle" fill="#106ebe" letter-spacing="-0.3">123</text><path d="M2.5 13.6 H15.5" stroke="#605e5c" stroke-width="0.8" fill="none" /></g><g transform="translate(1166.0,266.6)"><rect x="0.5" y="0.5" width="17" height="17" fill="#fbfaf9" stroke="#323130" stroke-width="1"/><path d="M3.5 3 V15" stroke="#323130" stroke-width="0.9" fill="none" /><path d="M5.5 5 H14.5 M5.5 11 H14.5" stroke="#106ebe" stroke-width="1.8" fill="none" /><path d="M5.5 8 H11 M5.5 14 H10" stroke="#323130" stroke-width="0.9" fill="none" /></g><g transform="translate(1194.0,266.6)"><rect x="0.5" y="2.5" width="17" height="13.5" fill="#fbfaf9" stroke="#323130" stroke-width="1"/><path d="M2.6 10 L5.4 5 L8.2 10 Z" stroke="#2ea043" stroke-width="0.9" fill="#bfe5c8" /><path d="M9.6 5 H15.2 L12.4 10 Z" stroke="#d13438" stroke-width="0.9" fill="#f1a5a7" /><path d="M2.5 13 H15.5" stroke="#605e5c" stroke-width="0.8" fill="none" /></g><g transform="translate(1222.0,266.6)"><rect x="0.5" y="0.8" width="16.5" height="15.5" fill="#fbfaf9" stroke="#323130" stroke-width="1"/><rect x="1" y="1.3" width="15.5" height="2" fill="#c8c6c4" stroke="#c8c6c4" stroke-width="1"/><rect x="3" y="6.5" width="2.6" height="2.6" fill="#c8c6c4" stroke="#605e5c" stroke-width="0.9"/><rect x="3" y="11.5" width="2.6" height="2.6" fill="#c8c6c4" stroke="#605e5c" stroke-width="0.9"/><rect x="8" y="8.5" width="11" height="9" fill="#f3f2f1"/><path d="M9 9.8 H18.4 L15 13.8 V18.8 H12.4 V13.8 Z" stroke="#323130" stroke-width="1" fill="#fbfaf9" stroke-linejoin="round"/></g><g transform="translate(1250.0,266.6)"><rect x="0.5" y="0.8" width="17" height="16.4" fill="#fbfaf9" stroke="#323130" stroke-width="1"/><rect x="1" y="1.3" width="16" height="2.2" fill="#c8c6c4" stroke="#c8c6c4" stroke-width="1"/><path d="M0.5 3.8 H17.5 M0.5 8.2 H17.5 M0.5 12.6 H17.5 M6.2 3.8 V17.2 M11.8 3.8 V17.2" stroke="#323130" stroke-width="1" fill="none" /></g><g transform="translate(886.0,294.6)"><rect x="0.5" y="0.8" width="17" height="16.4" fill="#fbfaf9" stroke="#323130" stroke-width="1"/><rect x="1" y="1.3" width="16" height="2.2" fill="#c8c6c4" stroke="#c8c6c4" stroke-width="1"/><rect x="11.8" y="3.8" width="5.7" height="8.8" fill="#83beec" stroke="#106ebe" stroke-width="1"/><rect x="0.5" y="12.6" width="17" height="4.6" fill="#83beec" stroke="#106ebe" stroke-width="1"/><path d="M0.5 3.8 H17.5 M0.5 8.2 H17.5 M0.5 12.6 H17.5 M6.2 3.8 V17.2 M11.8 3.8 V17.2" stroke="#323130" stroke-width="1" fill="none" /><path d="M6.2 12.6 V17.2 M11.8 8.2 V17.2 M11.8 8.2 H17.5 M0.5 12.6 H17.5" stroke="#106ebe" stroke-width="1" fill="none" /></g><g transform="translate(914.0,294.6)"><text x="9" y="15.4" font-family="Liberation Sans,sans-serif" font-size="14.2" font-weight="700" text-anchor="middle" fill="#1f7dc4">R</text></g><g transform="translate(942.0,294.6)"><text x="9" y="13.2" font-family="Liberation Sans,sans-serif" font-size="15.5" font-weight="700" text-anchor="middle" fill="#1f7dc4" letter-spacing="-0.4">Py</text></g><g transform="translate(970.0,294.6)"><path d="M0.5 0 V17.5 H18" stroke="#323130" stroke-width="1" fill="none" /><path d="M0.5 3.5 H13" stroke="#106ebe" stroke-width="1" fill="none" /><circle cx="15" cy="3.5" r="1.8" fill="#83beec" stroke="#106ebe" stroke-width="1"/><path d="M0.5 8.2 H9.5 M0.5 12.4 H5.5" stroke="#605e5c" stroke-width="0.9" fill="none" /><rect x="9.5" y="7" width="2.4" height="2.4" fill="#c8c6c4" stroke="#605e5c" stroke-width="0.8"/><rect x="5.5" y="11.2" width="2.4" height="2.4" fill="#c8c6c4" stroke="#605e5c" stroke-width="0.8"/></g><g transform="translate(998.0,294.6)"><path d="M7 8.5 H9.6 M9.6 2.8 V14.4 M9.6 2.8 H11.5 M9.6 8.5 H11.5 M9.6 14.4 H11.5" stroke="#323130" stroke-width="1" fill="none" /><rect x="0.5" y="6.5" width="6.5" height="4" fill="#83beec" stroke="#106ebe" stroke-width="1"/><rect x="11.5" y="0.8" width="6" height="4" fill="#83beec" stroke="#106ebe" stroke-width="1"/><rect x="11.5" y="6.5" width="6" height="4" fill="#83beec" stroke="#106ebe" stroke-width="1"/><rect x="11.5" y="12.4" width="6" height="4" fill="#83beec" stroke="#106ebe" stroke-width="1"/></g><g transform="translate(1026.0,294.6)"><path d="M0.8 1.5 H17.4 V12.8 H8 L3.6 17 V12.8 H0.8 Z" stroke="#106ebe" stroke-width="1.1" fill="#fbfaf9" stroke-linejoin="round"/></g><g transform="translate(1054.0,294.6)"><path d="M3.5 4.5 V0.8 H12.5 L16.5 5 V17.2 H3.5 V9.5" stroke="#323130" stroke-width="1" fill="#fbfaf9" /><path d="M12.5 0.8 V5 H16.5" stroke="#323130" stroke-width="1" fill="none" /><rect x="2.2" y="5.6" width="2.8" height="2.8" fill="#83beec" stroke="#106ebe" stroke-width="1"/><path d="M7 7.6 H13.5 M5.5 10.6 H12 M7 13.4 H10.5" stroke="#2b88d8" stroke-width="0.9" fill="none" /></g><g transform="translate(1082.0,294.6)"><path d="M4.2 1.5 H13.8 V7 C13.8 13.4 4.2 13.4 4.2 7 Z" stroke="#323130" stroke-width="1.1" fill="#fbfaf9" /><path d="M4.2 3 H0.8 C0.6 7 2 9 5 9.4 M13.8 3 H17.2 C17.4 7 16 9 13 9.4" stroke="#323130" stroke-width="1.1" fill="none" /><path d="M9 11.8 V14 M6.6 15.8 C6.6 14.4 11.4 14.4 11.4 15.8" stroke="#323130" stroke-width="1.1" fill="none" /><path d="M4.4 17 H13.6" stroke="#106ebe" stroke-width="1.6" fill="none" /><path d="M5 1.2 H13" stroke="#106ebe" stroke-width="1.4" fill="none" /></g><g transform="translate(1110.0,294.6)"><path d="M3 0.8 H11.5 L15.5 5 V17.4 H3 Z" stroke="#323130" stroke-width="1.2" fill="#e1dfdd" stroke-linejoin="round"/><path d="M11.5 0.8 V5 H15.5" stroke="#323130" stroke-width="1" fill="none" /><rect x="5" y="11.5" width="1.8" height="4.2" fill="#323130" stroke="#323130" stroke-width="0.4"/><rect x="8.2" y="13" width="1.8" height="2.7" fill="#323130" stroke="#323130" stroke-width="0.4"/><rect x="11.4" y="9" width="1.8" height="6.7" fill="#323130" stroke="#323130" stroke-width="0.4"/></g><g transform="translate(1138.0,294.6)"><rect x="2.5" y="4" width="15" height="12" fill="#fbfaf9" stroke="#323130" stroke-width="1"/><text x="10.4" y="12.6" font-family="Liberation Sans,sans-serif" font-size="7.4" text-anchor="middle" fill="#106ebe" letter-spacing="-0.3">123</text><path d="M4.5 14.2 H15.5" stroke="#605e5c" stroke-width="0.8" fill="none" /><path transform="translate(0.6,0)" d="M2.6 -1.2 H7.4 L5.2 3.2 H7.8 L0.6 11 L2.6 5.6 H-0.6 Z" fill="#f9b65c" stroke="#d97b1e" stroke-width="0.9" stroke-linejoin="round"/></g><g transform="translate(1166.0,294.6)"><path d="M7 1.4 H17 V9.5 M4 12 V16.2 H11" stroke="#323130" stroke-width="1" fill="none" /><rect x="7.4" y="1.9" width="9.2" height="1.8" fill="#c8c6c4" stroke="#c8c6c4" stroke-width="1"/><rect x="5" y="8" width="2.4" height="2.4" fill="#c8c6c4" stroke="#605e5c" stroke-width="0.8"/><rect x="5" y="12.2" width="2.4" height="2.4" fill="#c8c6c4" stroke="#605e5c" stroke-width="0.8"/><path d="M9.6 10 H19.0 L15.6 14 V19 H13.0 V14 Z" stroke="#323130" stroke-width="1" fill="#fbfaf9" stroke-linejoin="round"/><path transform="translate(0.6,0)" d="M2.6 -1.2 H7.4 L5.2 3.2 H7.8 L0.6 11 L2.6 5.6 H-0.6 Z" fill="#f9b65c" stroke="#d97b1e" stroke-width="0.9" stroke-linejoin="round"/></g><g transform="translate(1194.0,294.6)"><path d="M5.5 1.4 H17 V8 M3 9.5 V16.6 H12" stroke="#106ebe" stroke-width="1.2" fill="none" /><path d="M13.5 3 H9.8 V5.6 H8 V8.6 H6.4 L5.4 12 L4.2 14.8 H7.4 L8.6 12.4 L10.6 10.4 V7.6 L13.5 5.8 Z" stroke="#2b88d8" stroke-width="0.8" fill="#7db9e8" /><path d="M0.4 1.2 C0.4 -1.6 5.2 -1.6 5.2 1.2 V5.4 L2.8 8.4 L0.4 5.4 Z" stroke="#d97b1e" stroke-width="0.8" fill="#e8892f" /><circle cx="2.8" cy="2" r="0.9" fill="#fff"/><circle cx="15.6" cy="15.2" r="2.4" fill="#e8892f"/><rect x="15.4" y="9.8" width="2" height="2" fill="#e8892f" stroke="#e8892f" stroke-width="0.2"/></g><g transform="translate(1222.0,294.6)"><path d="M9 0.8 L17.4 9 L9 17.2 L0.6 9 Z" stroke="#a53dc2" stroke-width="1.1" fill="none" stroke-linejoin="round"/><path d="M4.8 4.9 L13.2 13.1 M13.2 4.9 L4.8 13.1" stroke="#a53dc2" stroke-width="1.1" fill="none" /><path d="M6.4 0.9 L9 3.6 M11.6 17.1 L9 14.4" stroke="#a53dc2" stroke-width="0.9" fill="none" /></g><g transform="translate(1250.0,294.6)"><path d="M0.8 2 H11.4 L17.4 9 L11.4 16 H0.8 L6.8 9 Z" stroke="#0f6cbd" stroke-width="1.2" fill="none" stroke-linejoin="round"/><path d="M12.2 2.6 L2.4 14.4 M14.8 5.8 L6.4 16" stroke="#2b88d8" stroke-width="1" fill="none" /></g></svg>
<svg class="a" style="left:0;top:0" width="1280" height="230" viewBox="0 0 1280 230" fill="none"><path d="M887.6 187.2 H906" stroke="#323130" stroke-width="1.2" fill="none" /><rect x="887.4" y="192" width="23.6" height="8" fill="#117865" stroke="#1b1a19" stroke-width="1" stroke-dasharray="1.6 1.1"/><rect x="887.4" y="202.6" width="23.6" height="8.4" fill="#117865" stroke="#1b1a19" stroke-width="1" stroke-dasharray="1.6 1.1"/><path d="M960.3 206.4 H955.6 V197 H960.3 V188.9 H968.4 V193 H974.2 V195.4" stroke="#323130" stroke-width="1.15" fill="none" /><path d="M976.4 192.4 C977.6 193.6 970 203.4 967.4 205 C965.4 203.6 965.6 203 964.6 201.8 C966.6 198.4 975 191.2 976.4 192.4 Z" stroke="#323130" stroke-width="1.1" fill="#f3f2f1" stroke-linejoin="round"/><path d="M964.6 201.8 C962 202 961.4 204.4 961.6 206.6 C960.8 208 959.6 208.6 958.4 208.8 C961.4 211 967.4 210 967.4 205" stroke="#323130" stroke-width="1.1" fill="#f3f2f1" /><circle cx="1029.6" cy="198.4" r="10.4" fill="none" stroke="#323130" stroke-width="1.2"/><path d="M1037 206 L1042.6 211.4" stroke="#323130" stroke-width="2" fill="none" /><path d="M1019.6 199.4 L1024 196.4 L1028 199 L1036 192.6 M1032.4 192.6 H1036 V196" stroke="#323130" stroke-width="1.1" fill="none" /><path d="M1023.6 201 V207 M1027.4 203 V208.6 M1031.2 201 V208.6 M1035 199 V207" stroke="#323130" stroke-width="1.1" fill="none" /></svg>
<svg class="a" style="left:0;top:0" width="40" height="290" viewBox="0 0 40 290" fill="none"><path d="M12.9 139.6 V152.3 H26" stroke="#323130" stroke-width="1.2" fill="none"/><rect x="14.5" y="141.2" width="2.4" height="9.4" stroke="#323130" stroke-width="1.1" fill="none" rx="0.8"/><rect x="18.6" y="143.6" width="2.4" height="7" stroke="#323130" stroke-width="1.1" fill="none" rx="0.8"/><rect x="22.6" y="140.6" width="2.4" height="10" stroke="#323130" stroke-width="1.1" fill="none" rx="0.8"/><rect x="11.4" y="178.8" width="15" height="13.8" stroke="#605e5c" stroke-width="1.1" fill="none"/><path d="M11.4 183.2 H26.4 M11.4 187.8 H26.4 M16.4 178.8 V192.6 M21.4 178.8 V192.6" stroke="#605e5c" stroke-width="1" fill="none"/><rect x="10.4" y="222" width="7" height="6.4" stroke="#605e5c" stroke-width="1.1" fill="none"/><rect x="20.6" y="217.6" width="7" height="5.8" stroke="#605e5c" stroke-width="1.1" fill="none"/><rect x="20.6" y="227.6" width="7" height="6.6" stroke="#605e5c" stroke-width="1.1" fill="none"/><path d="M17.4 224 H19 V220.4 H20.6 M17.4 226.4 H19 V231 H20.6 M20.6 231 H27.6" stroke="#605e5c" stroke-width="1" fill="none"/><path d="M13.4 267 V259 H19.6 L24.4 263.4 V266.6 M19.6 259 V263.4 H24.4 M24.4 266 C25.8 268.6 25.6 272 24 274.6" stroke="#605e5c" stroke-width="1.1" fill="none"/><text x="9" y="274.6" font-family="Liberation Sans,sans-serif" font-size="6.6" fill="#605e5c" letter-spacing="-0.2">DAX</text></svg>
<div class="a" style="left:166.8px;top:784.5px;width:75.79999999999998px;height:35.0px;background:#ffffff;"></div>
<div class="a" style="left:166.8px;top:815.5px;width:75.79999999999998px;height:4.0px;background:#117865;"></div>
<span class="t" id="t103" style="left:187.4px;top:798.34px;font-size:12px;color:#252423;-webkit-text-stroke:0.35px #252423;letter-spacing:-0.600px;">Page 1</span>
<div class="a" style="left:166px;top:785px;width:1px;height:30.5px;background:#8a8886;"></div>
<div class="a" style="left:38.5px;top:784.5px;width:1.0px;height:35.5px;background:#dddbd9;"></div>
<div class="a" style="left:243px;top:784.5px;width:39px;height:35.0px;background:#117865;"></div>
<svg class="a" style="left:256.6px;top:796px;" width="11.6" height="11.6" viewBox="0 0 11.6 11.6"><path d="M5.8 0 V11.6 M0 5.8 H11.6" stroke="#fff" stroke-width="2.5" fill="none"/></svg>
<svg class="a" style="left:51px;top:792.4px;" width="20" height="14" viewBox="0 0 20 14"><rect x="0.8" y="0.8" width="17.6" height="10" rx="0.8" fill="none" stroke="#484644" stroke-width="1.5"/><path d="M9.6 11 V12.8 M5.8 13 H13.6" stroke="#484644" stroke-width="1.2"/></svg>
<div class="a" style="left:48.4px;top:812.5px;width:24.6px;height:3.0px;background:#117865;border-radius:1.5px;"></div>
<svg class="a" style="left:98.4px;top:789.8px;" width="14" height="21" viewBox="0 0 14 21"><rect x="0.9" y="0.9" width="11.6" height="19" rx="1.8" fill="none" stroke="#484644" stroke-width="1.3"/><circle cx="6.7" cy="16.8" r="0.9" fill="#484644"/></svg>
<svg class="a" style="left:132.2px;top:798.8px;" width="6" height="9" viewBox="0 0 6 9"><path d="M5.4 0.2 L0.4 4.4 L5.4 8.6Z" fill="#c8c6c4"/></svg>
<svg class="a" style="left:154.4px;top:798.8px;" width="6" height="9" viewBox="0 0 6 9"><path d="M0.4 0.2 L5.4 4.4 L0.4 8.6Z" fill="#c8c6c4"/></svg>
<span class="t" id="t104" style="left:2.2px;top:827.54px;font-size:12px;color:#252423;letter-spacing:-0.220px;">Page 1 of 1</span>
<span class="t" id="t105" style="left:1421.2px;top:825.50px;font-size:13px;color:#605e5c;">-</span>
<div class="a" style="left:1430px;top:831.7px;width:100px;height:1.0px;background:#605e5c;"></div>
<div class="a" style="left:1457.8px;top:827px;width:4.400000000000091px;height:10.700000000000045px;background:#605e5c;"></div>
<div class="a" style="left:1480.3px;top:830px;width:1.0px;height:5px;background:#605e5c;"></div>
<svg class="a" style="left:1536px;top:828.5px;" width="8" height="8" viewBox="0 0 8 8"><path d="M4 0 V8 M0 4 H8" stroke="#605e5c" stroke-width="1.1" fill="none"/></svg>
<span class="t" id="t106" style="left:1557.2px;top:826.44px;font-size:12px;color:#605e5c;letter-spacing:-0.300px;">63%</span>
<svg class="a" style="left:1599px;top:827px;" width="17" height="12" viewBox="0 0 17 12"><rect x="0.6" y="0.6" width="15.6" height="10.6" fill="none" stroke="#605e5c" stroke-width="1.1"/><path d="M3 5 V3 H5.5 M11.3 3 H13.8 V5 M13.8 7 V9 H11.3 M5.5 9 H3 V7" fill="none" stroke="#605e5c" stroke-width="1"/></svg>
<div class="a" style="left:0px;top:844px;width:1636px;height:1px;background:#5a5a5a;"></div>
</body></html>
